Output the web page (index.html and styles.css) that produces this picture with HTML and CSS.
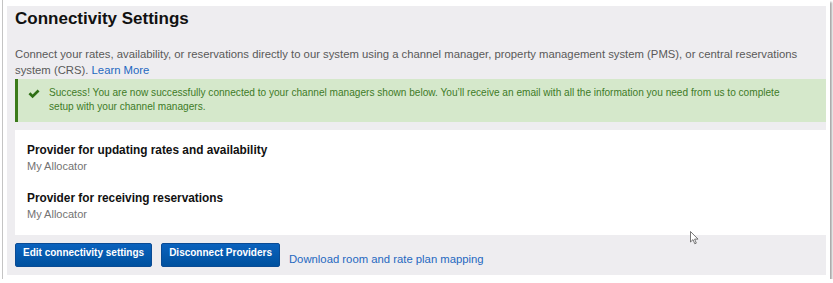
FILE: index.html
```html
<!DOCTYPE html>
<html lang="en">
<head>
    <meta charset="UTF-8">
    <title>Connectivity Settings</title>
    <link rel="stylesheet" href="styles.css">
</head>
<body>
    <div class="window">
        <div class="panel">
            <h1>Connectivity Settings</h1>
            <p class="intro">Connect your rates, availability, or reservations directly to our system using a channel manager, property management system (PMS), or central reservations system (CRS). <a href="#">Learn More</a></p>

            <div class="alert">
                <svg class="check" width="12" height="10" viewBox="0 0 12 10">
                    <path d="M0.5 5.2 L2.4 3.3 L4.6 5.5 L9.6 0.5 L11.5 2.4 L4.6 9.3 Z" fill="#2f6f15"/>
                </svg>
                <p>Success! You are now successfully connected to your channel managers shown below. You’ll receive an email with all the information you need from us to complete setup with your channel managers.</p>
            </div>

            <div class="card">
                <div class="provider">
                    <h3>Provider for updating rates and availability</h3>
                    <span>My Allocator</span>
                </div>
                <div class="provider">
                    <h3>Provider for receiving reservations</h3>
                    <span>My Allocator</span>
                </div>
            </div>

            <div class="actions">
                <button type="button">Edit connectivity settings</button>
                <button type="button">Disconnect Providers</button>
                <a class="mapping" href="#">Download room and rate plan mapping</a>
            </div>
        </div>

        <!-- mouse pointer captured in the screenshot -->
        <svg class="cursor" width="9" height="14" viewBox="0 0 9 14">
            <path d="M0.5 0.5 L0.5 11 L3 8.6 L4.8 12.8 L6.3 12.1 L4.6 8.1 L8 8.1 Z" fill="#fff" stroke="#555" stroke-width="0.8"/>
        </svg>
    </div>
</body>
</html>
```

FILE: styles.css
```css
/* General Styles */
body {
    margin: 0;
    background: #ffffff;
    font-family: 'Liberation Sans', Arial, sans-serif;
}

.window {
    position: relative;
    box-sizing: border-box;
    width: 828px;
    height: 279px;
    margin-left: 2px;
    padding: 6px 4px 4px 4px;
    border-left: 1px solid #c4c4c4;
    box-shadow: 2px 2px 2px rgba(0, 0, 0, 0.35);
}

.panel {
    height: 100%;
    box-sizing: border-box;
    background: #eeedf0; /* light gray page */
    padding: 3px 0 0 8px;
}

h1 {
    margin: 0;
    font-size: 17px;
    line-height: 20px;
    color: #111111;
}

.intro {
    margin: 17px 0 0;
    font-size: 11.3px;
    line-height: 16px;
    color: #595959;
}

a {
    color: #1f68c0;
    text-decoration: none;
}

/* Success message */
.alert {
    display: flex;
    margin-top: 1px;
    padding: 7px 40px 8px 10px;
    background: #d5e8cb;
    border-left: 3px solid #3b7a1a;
}

.alert .check {
    flex: none;
    margin: 3px 0 0 0;
}

.alert p {
    margin: 0 0 0 9px;
    font-size: 10.1px;
    line-height: 14px;
    color: #3e7b27;
}

/* Providers */
.card {
    margin-top: 8px;
    padding: 12px 12px 13px;
    background: #ffffff;
}

.provider + .provider {
    margin-top: 16px;
}

.provider h3 {
    margin: 0;
    font-size: 11.85px;
    line-height: 16px;
    color: #111111;
}

.provider span {
    display: block;
    font-size: 11px;
    line-height: 16px;
    color: #737373;
}

/* Buttons */
.actions {
    display: flex;
    gap: 8px;
    margin-top: 8px;
}

button {
    height: 24px;
    padding: 0 7px 4px;
    border: 1px solid #0a4b94;
    border-radius: 2px;
    background: linear-gradient(#0b62bd, #00519f);
    color: #ffffff;
    font-family: 'Liberation Sans', Arial, sans-serif;
    font-size: 10px;
    font-weight: bold;
    line-height: 18px;
    cursor: pointer;
}

button + button {
    margin-left: 1px;
}

.mapping {
    align-self: flex-end;
    margin-left: 1px;
    margin-bottom: 1px;
    font-size: 11.3px;
    line-height: 14px;
}

.cursor {
    position: absolute;
    left: 687px;
    top: 231px;
}
```
